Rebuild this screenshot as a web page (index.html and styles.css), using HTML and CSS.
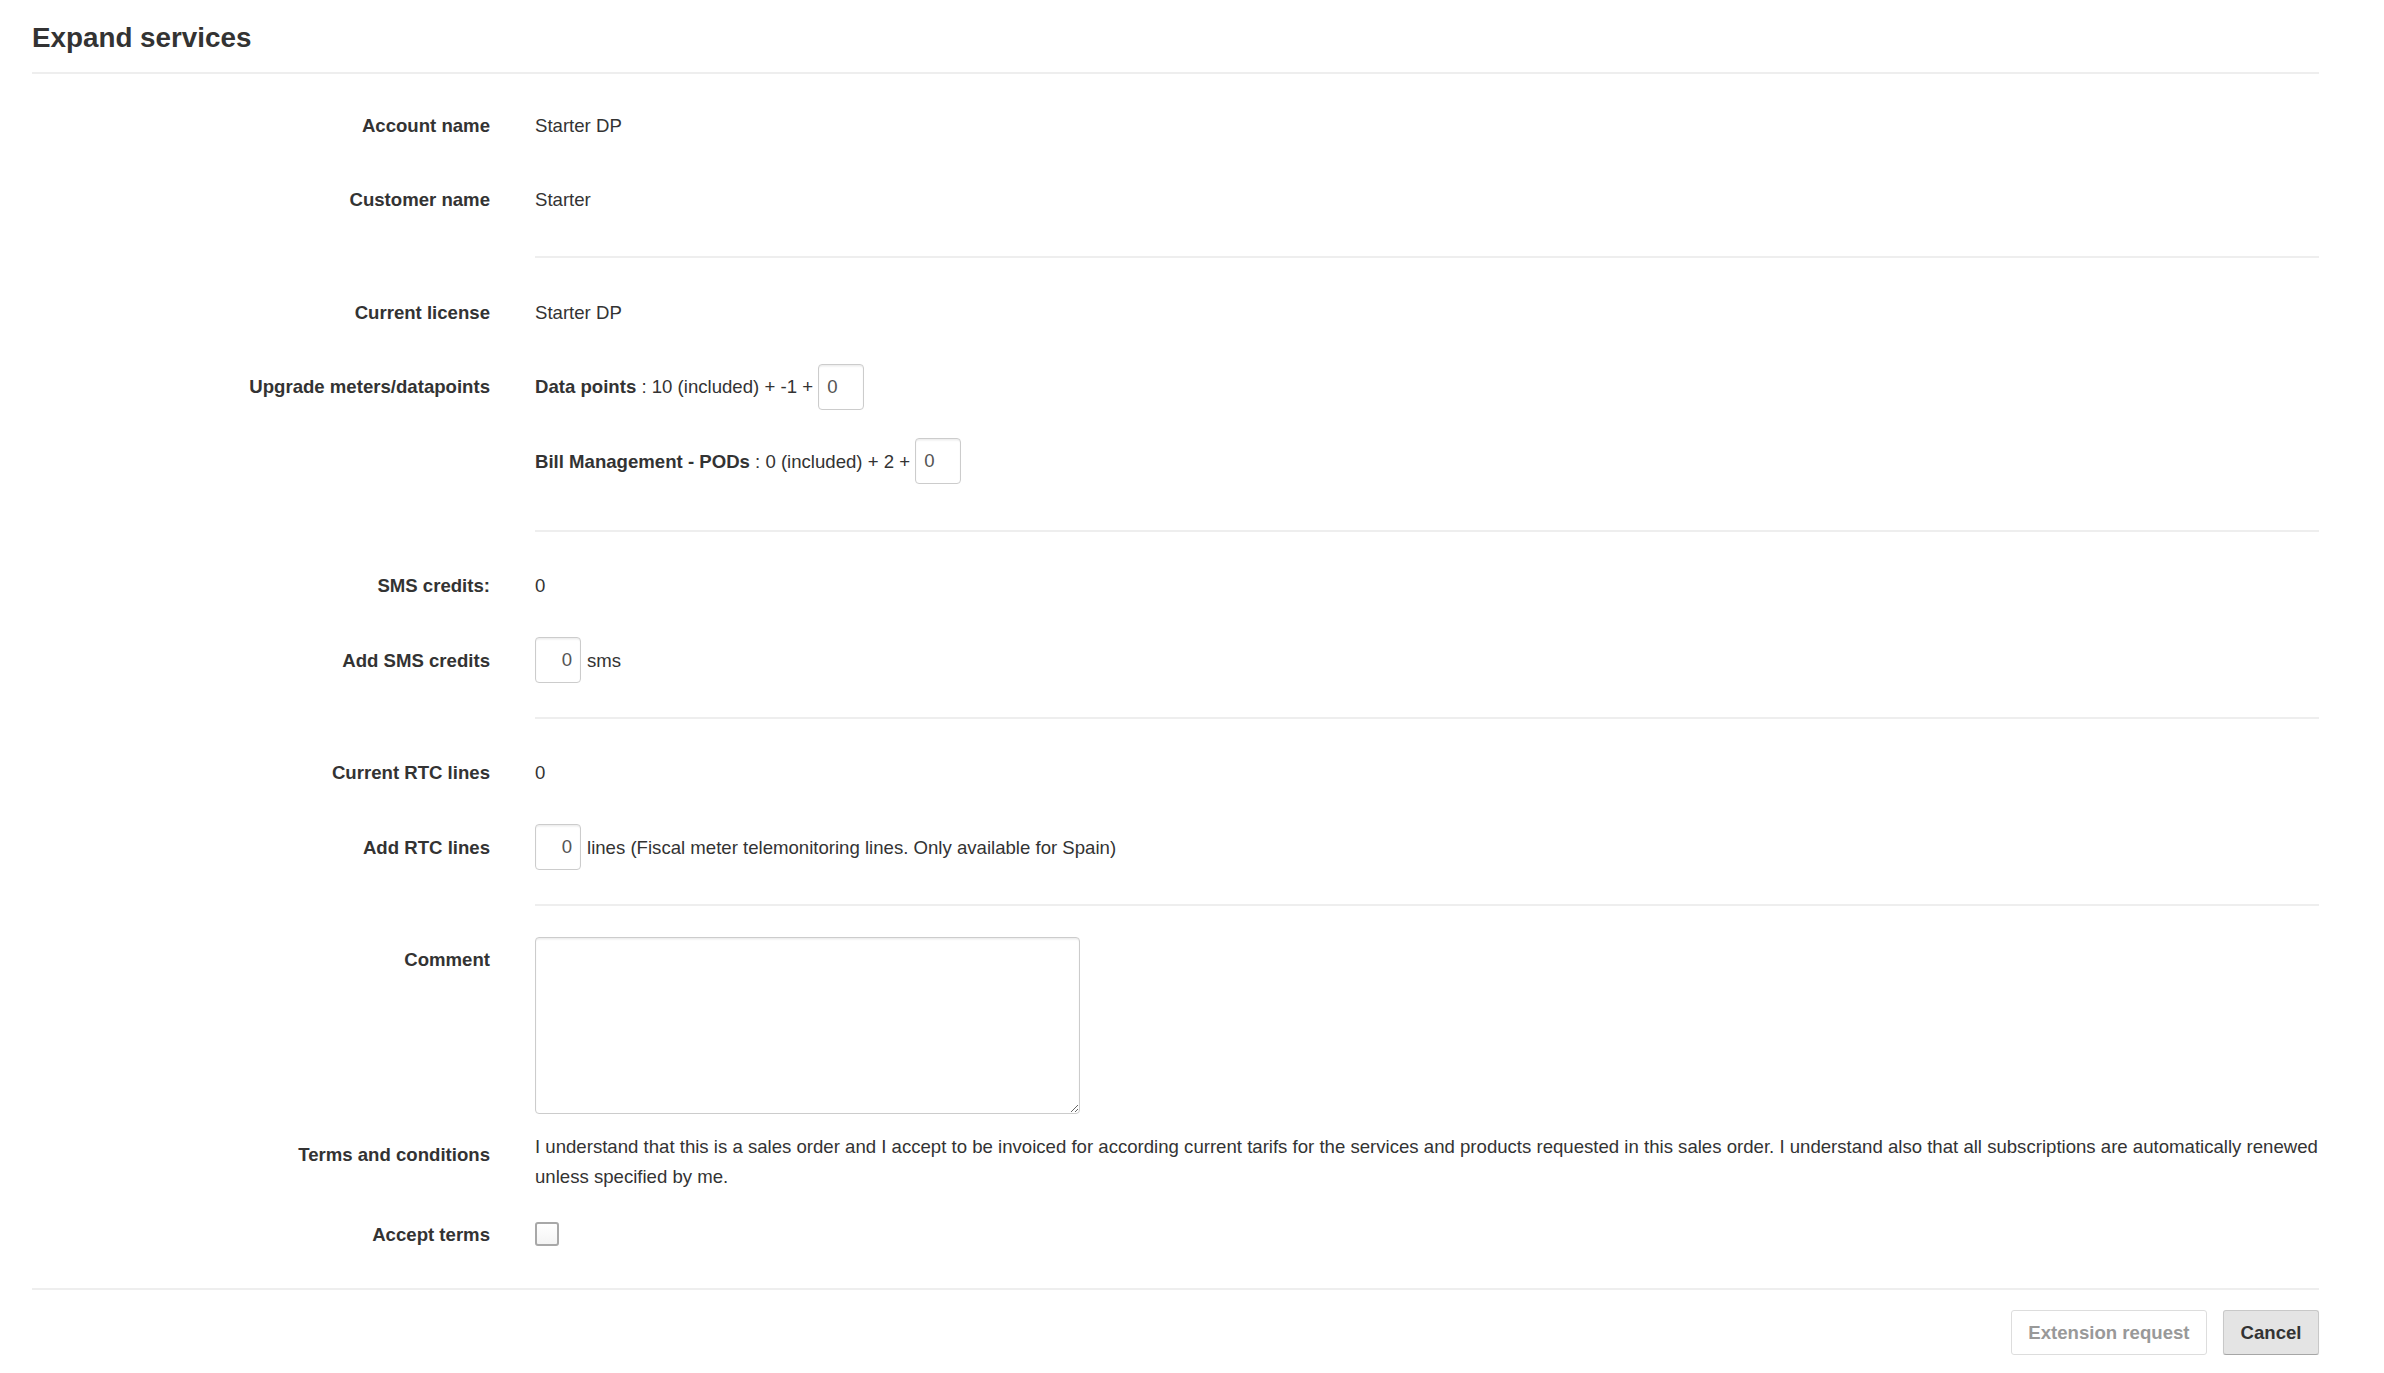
FILE: index.html
```html
<!DOCTYPE html>
<html lang="en">
<head>
<meta charset="utf-8">
<title>Expand services</title>
<link rel="stylesheet" href="styles.css">
</head>
<body>
<div class="page">
  <h1 class="title">Expand services</h1>
  <form class="form">
    <div class="row">
      <div class="label">Account name</div>
      <div class="value">Starter DP</div>
    </div>
    <div class="row">
      <div class="label">Customer name</div>
      <div class="value">Starter</div>
    </div>
    <hr class="sep">
    <div class="row">
      <div class="label">Current license</div>
      <div class="value">Starter DP</div>
    </div>
    <div class="row row-top row-upgrade">
      <div class="label">Upgrade meters/datapoints</div>
      <div class="value value-stack">
        <div class="line"><b>Data points</b>&nbsp;: 10 (included) + -1 + <input class="num" type="text" value="0"></div>
        <div class="line"><b>Bill Management - PODs</b>&nbsp;: 0 (included) + 2 + <input class="num" type="text" value="0"></div>
      </div>
    </div>
    <hr class="sep">
    <div class="row">
      <div class="label">SMS credits:</div>
      <div class="value">0</div>
    </div>
    <div class="row">
      <div class="label">Add SMS credits</div>
      <div class="value"><input class="num num-right" type="text" value="0"><span class="unit">sms</span></div>
    </div>
    <hr class="sep">
    <div class="row">
      <div class="label">Current RTC lines</div>
      <div class="value">0</div>
    </div>
    <div class="row">
      <div class="label">Add RTC lines</div>
      <div class="value"><input class="num num-right" type="text" value="0"><span class="unit">lines (Fiscal meter telemonitoring lines. Only available for Spain)</span></div>
    </div>
    <hr class="sep">
    <div class="row row-top row-comment">
      <div class="label">Comment</div>
      <div class="value"><textarea class="comment"></textarea></div>
    </div>
    <div class="row row-top row-terms">
      <div class="label">Terms and conditions</div>
      <div class="value"><p class="terms">I understand that this is a sales order and I accept to be invoiced for according current tarifs for the services and products requested in this sales order. I understand also that all subscriptions are automatically renewed unless specified by me.</p></div>
    </div>
    <div class="row row-accept">
      <div class="label">Accept terms</div>
      <div class="value"><input class="check" type="checkbox"></div>
    </div>
    <div class="actions">
      <button type="button" class="btn btn-disabled">Extension request</button>
      <button type="button" class="btn btn-default">Cancel</button>
    </div>
  </form>
</div>
</body>
</html>
```

FILE: styles.css
```css
html, body {
  margin: 0;
  padding: 0;
  background: #ffffff;
}

body {
  font-family: "Liberation Sans", Arial, Helvetica, sans-serif;
  font-size: 18.6px;
  color: #333333;
}

.page {
  margin-left: 32px;
  width: 2287px;
}

.title {
  margin: 0;
  padding: 21.5px 0 18.5px 0;
  font-size: 27.8px;
  line-height: 32px;
  font-weight: bold;
  color: #333333;
  border-bottom: 2px solid #eeeeee;
}

.form {
  display: flex;
  flex-direction: column;
  padding-top: 28px;
  margin: 0;
}

.row {
  display: grid;
  grid-template-columns: 458px 1fr;
  column-gap: 45px;
  align-items: center;
  min-height: 46px;
  margin-bottom: 28.5px;
}

.row-top {
  align-items: start;
}

.label {
  display: flex;
  align-items: center;
  justify-content: flex-end;
  min-height: 46px;
  font-weight: bold;
  text-align: right;
  line-height: 27px;
}

.value {
  display: flex;
  align-items: center;
  line-height: 27px;
  min-height: 46px;
}

.value-stack {
  flex-direction: column;
  align-items: flex-start;
  gap: 28.5px;
}

.line {
  display: flex;
  align-items: center;
  height: 46px;
  white-space: pre;
}

.line b {
  font-weight: bold;
}

.row-upgrade {
  margin-bottom: 40.5px;
}

.sep {
  margin: 5px 0 31px 503px;
  border: 0;
  border-top: 2px solid #eeeeee;
  height: 0;
}

.num {
  box-sizing: border-box;
  width: 46px;
  height: 46px;
  margin: 0;
  padding: 0 8px;
  border: 1.5px solid #cccccc;
  border-radius: 4px;
  box-shadow: inset 0 1.5px 1.5px rgba(0, 0, 0, 0.075);
  font-family: inherit;
  font-size: 18.6px;
  color: #555555;
  background: #ffffff;
}

.num-right {
  text-align: right;
}

.unit {
  margin-left: 6px;
}

.row-comment {
  margin-bottom: 18px;
}

.comment {
  box-sizing: border-box;
  width: 545px;
  height: 177px;
  margin: 0;
  padding: 6px 9px;
  border: 1.5px solid #cccccc;
  border-radius: 4px;
  box-shadow: inset 0 1.5px 1.5px rgba(0, 0, 0, 0.075);
  font-family: inherit;
  font-size: 18.6px;
  color: #555555;
  background: #ffffff;
}

.row-terms {
  margin-bottom: 19.5px;
}

.terms {
  margin: 0;
  line-height: 30px;
}

.row-accept {
  margin-bottom: 31px;
}

.check {
  appearance: none;
  -webkit-appearance: none;
  box-sizing: border-box;
  width: 24px;
  height: 24px;
  margin: 0;
  border: 2px solid #a8a8a8;
  border-radius: 3px;
  background: linear-gradient(#ffffff, #f4f4f4);
}

.actions {
  display: flex;
  justify-content: flex-end;
  gap: 16px;
  border-top: 2px solid #eeeeee;
  padding-top: 20px;
}

.btn {
  box-sizing: border-box;
  height: 45px;
  padding: 0 16.5px;
  border-radius: 3px;
  font-family: inherit;
  font-size: 18.6px;
  font-weight: bold;
  line-height: 27px;
  cursor: pointer;
}

.btn-disabled {
  background: #ffffff;
  color: #999999;
  border: 1.5px solid #dddddd;
}

.btn-default {
  background: #e4e4e4;
  color: #333333;
  border: 1.5px solid #c8c8c8;
  border-bottom-color: #a6a6a6;
  box-shadow: 0 1px 1px rgba(0, 0, 0, 0.08);
}
```
